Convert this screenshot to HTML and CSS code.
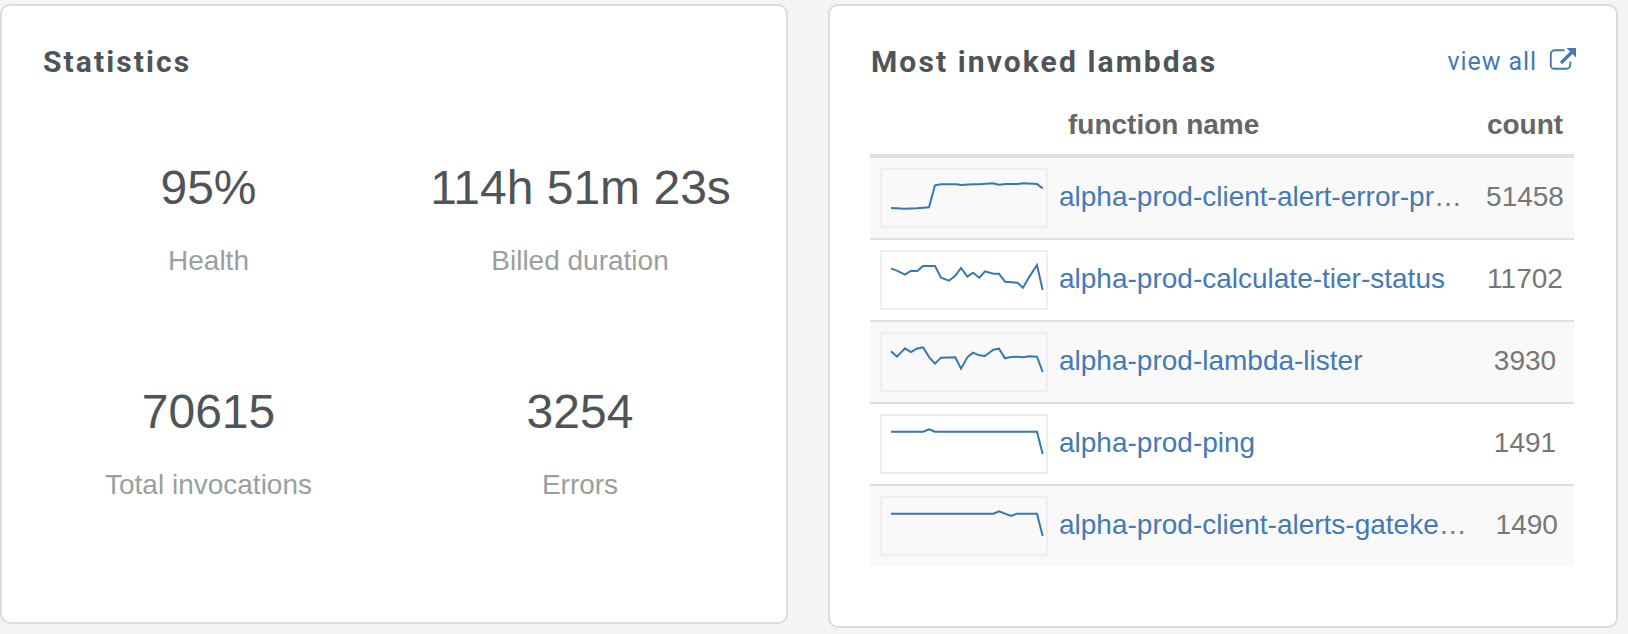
FILE: index.html
```html
<!DOCTYPE html>
<html lang="en">
<head>
<meta charset="utf-8">
<title>Dashboard</title>
<link rel="stylesheet" href="styles.css">
</head>
<body>
<main class="dashboard">
  <section class="card card-stats">
    <h2 class="card-title">Statistics</h2>
    <div class="stats">
      <div class="stat"><div class="stat-value">95%</div><div class="stat-label">Health</div></div>
      <div class="stat"><div class="stat-value stat-duration">114h 51m 23s</div><div class="stat-label">Billed duration</div></div>
      <div class="stat"><div class="stat-value">70615</div><div class="stat-label">Total invocations</div></div>
      <div class="stat"><div class="stat-value">3254</div><div class="stat-label">Errors</div></div>
    </div>
  </section>
  <section class="card card-lambdas">
    <header class="card-header">
      <h2 class="card-title title-lambdas">Most invoked lambdas</h2>
      <a class="view-all"><span>view all</span>
        <svg class="icon" viewBox="0 0 28 24"><path d="M15.500 3.300H5.800a4 4 0 0 0-4 4v11a3.500 3.500 0 0 0 3.500 3.500h12a4 4 0 0 0 4-4V14.500" fill="none" stroke="currentColor" stroke-width="1.900"/><path d="M12 16L23 5" fill="none" stroke="currentColor" stroke-width="3.200"/><path d="M17.500 1H27v9.500z" fill="currentColor"/></svg>
      </a>
    </header>
    <div class="table">
      <div class="row head"><span></span><span class="head-name">function name</span><span class="count">count</span></div>
      <div class="row odd">
        <svg class="spark" viewBox="6 6 492 168"><polyline points="33,120 75,122 110,121 130,119.500 147,118 165,52 183,49 230,49 243,51 280,49 300,49 338,46 357,50 377,48 412,48 429,46 471,48 488,61"/></svg>
        <div class="name"><a>alpha-prod-client-alert-error-pr</a>…</div><span class="count">51458</span>
      </div>
      <div class="row">
        <svg class="spark" viewBox="6 6 492 168"><polyline points="33,56 51,62 75,74 92,63 112,63 129,48 165,48 183,83 207,92 225,78 243,54 262,80 279,68 298,83 315,64 340,71 357,71 375,95 412,98 429,113 447,82 471,45 488,120"/></svg>
        <div class="name"><a>alpha-prod-calculate-tier-status</a></div><span class="count">11702</span>
      </div>
      <div class="row odd">
        <svg class="spark" viewBox="6 6 492 168"><polyline points="33,58 51,74 75,49 93,60 110,50 129,46 148,76 165,95 183,77 226,76 243,110 262,76 279,62 298,70 315,72 340,53 357,50 375,79 393,75 412,74 429,76 447,73 471,74 488,120"/></svg>
        <div class="name"><a>alpha-prod-lambda-lister</a></div><span class="count">3930</span>
      </div>
      <div class="row">
        <svg class="spark" viewBox="6 6 492 168"><polyline points="33,53 130,53 147,46 165,53 471,53 488,120"/></svg>
        <div class="name"><a>alpha-prod-ping</a></div><span class="count">1491</span>
      </div>
      <div class="row odd">
        <svg class="spark" viewBox="6 6 492 168"><polyline points="33,53 340,53 357,46 375,53 393,60 411,53 471,53 488,120"/></svg>
        <div class="name"><a>alpha-prod-client-alerts-gateke</a>…</div><span class="count">1490</span>
      </div>
    </div>
  </section>
</main>
</body>
</html>
```

FILE: styles.css
```css
* { box-sizing: border-box; }
body {
  margin: 0;
  height: 634px;
  overflow: hidden;
  background: #f4f4f4;
  font: 28px/40px "Liberation Sans", Arial, sans-serif;
}
.dashboard {
  display: flex;
  align-items: flex-start;
  gap: 40px;
  padding-top: 4px;
}
.card {
  background: #fff;
  border: 2px solid #dcdcdc;
  border-radius: 10px;
}
.card-stats { width: 788px; height: 620px; padding: 36px 20px 0 21px; }
.card-lambdas { width: 790px; height: 624px; padding: 36px 42px 0 40px; }
.card-title {
  margin: 0;
  color: #4f5458;
  font: bold 30px/40px Roboto, sans-serif;
  letter-spacing: 2.1px;
  white-space: nowrap;
}
.card-stats .card-title { padding-left: 20px; }
.title-lambdas { padding-left: 1px; }
.card-header {
  display: flex;
  justify-content: space-between;
  margin-right: -3px;
}
.view-all {
  display: flex;
  gap: 12px;
  color: #437ab5;
  font: 25px/40px Roboto, sans-serif;
  letter-spacing: 0.9px;
}
.icon { width: 28px; height: 24px; margin-top: 5px; }
.stats {
  display: grid;
  grid-template-columns: 371px 1fr;
  grid-auto-rows: 224px;
  padding-top: 76px;
  text-align: center;
}
.stat-value { font-size: 48px; line-height: 60px; color: #4f5458; white-space: nowrap; }
.stat-duration { padding-left: 1px; }
.stat-label { line-height: 40px; margin-top: 23px; color: #9b9e9f; }
.table { color: #777; }
.row {
  display: grid;
  grid-template-columns: 168px 1fr 98px;
  column-gap: 11px;
  align-items: center;
  height: 82px;
  padding-left: 10px;
  border-top: 2px solid #dfdfdf;
}
.odd { background: #f9f9f9; }
.head {
  height: 74px;
  border-top: 0;
  padding-top: 13px;
  border-bottom: 2px solid #dfdfdf;
  color: #666;
  font-weight: bold;
}
.head-name { padding-left: 9px; }
.spark {
  display: block;
  width: 168px;
  height: 60px;
  border: 2px solid #eee;
}
.spark polyline { fill: none; stroke: #3677b6; stroke-width: 6; }
.name { white-space: nowrap; padding-bottom: 2px; }
.name a { color: #437ab5; }
.row:not(.head) .count { padding-bottom: 2px; }
.count { text-align: center; }
```
